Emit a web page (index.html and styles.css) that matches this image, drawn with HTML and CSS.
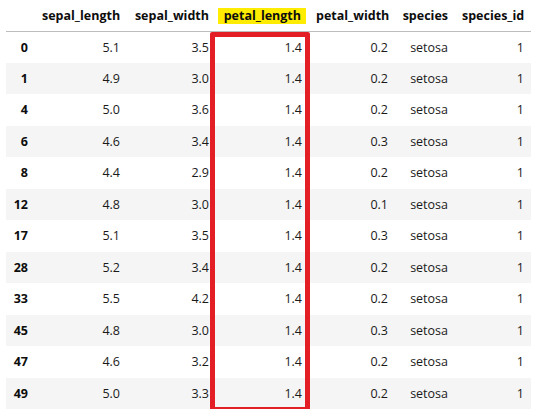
FILE: index.html
```html
<!DOCTYPE html>
<html>
<head>
<meta charset="utf-8">
<link rel="stylesheet" href="styles.css">
</head>
<body>
<div class="frame">
<table class="df">
<colgroup>
<col class="c-idx"><col class="c1"><col class="c2"><col class="c3"><col class="c4"><col class="c5"><col class="c6">
</colgroup>
<thead>
<tr><th></th><th>sepal_length</th><th>sepal_width</th><th class="hl-cell"><span class="hl">petal_length</span></th><th>petal_width</th><th>species</th><th>species_id</th></tr>
</thead>
<tbody>
<tr><th>0</th><td>5.1</td><td>3.5</td><td>1.4</td><td>0.2</td><td>setosa</td><td>1</td></tr>
<tr><th>1</th><td>4.9</td><td>3.0</td><td>1.4</td><td>0.2</td><td>setosa</td><td>1</td></tr>
<tr><th>4</th><td>5.0</td><td>3.6</td><td>1.4</td><td>0.2</td><td>setosa</td><td>1</td></tr>
<tr><th>6</th><td>4.6</td><td>3.4</td><td>1.4</td><td>0.3</td><td>setosa</td><td>1</td></tr>
<tr><th>8</th><td>4.4</td><td>2.9</td><td>1.4</td><td>0.2</td><td>setosa</td><td>1</td></tr>
<tr><th>12</th><td>4.8</td><td>3.0</td><td>1.4</td><td>0.1</td><td>setosa</td><td>1</td></tr>
<tr><th>17</th><td>5.1</td><td>3.5</td><td>1.4</td><td>0.3</td><td>setosa</td><td>1</td></tr>
<tr><th>28</th><td>5.2</td><td>3.4</td><td>1.4</td><td>0.2</td><td>setosa</td><td>1</td></tr>
<tr><th>33</th><td>5.5</td><td>4.2</td><td>1.4</td><td>0.2</td><td>setosa</td><td>1</td></tr>
<tr><th>45</th><td>4.8</td><td>3.0</td><td>1.4</td><td>0.3</td><td>setosa</td><td>1</td></tr>
<tr><th>47</th><td>4.6</td><td>3.2</td><td>1.4</td><td>0.2</td><td>setosa</td><td>1</td></tr>
<tr><th>49</th><td>5.0</td><td>3.3</td><td>1.4</td><td>0.2</td><td>setosa</td><td>1</td></tr>
</tbody>
</table>
<div class="mark-box"></div>
</div>
</body>
</html>
```

FILE: styles.css
```css
html, body {
  margin: 0;
  padding: 0;
  background: #ffffff;
}

.frame {
  position: relative;
  padding-left: 6px;
}

.df {
  border-collapse: collapse;
  border-spacing: 0;
  table-layout: fixed;
  width: 525px;
  font-family: "Open Sans", "Noto Sans", sans-serif;
  font-size: 12.5px;
  color: #1a1a1a;
}

.c-idx { width: 29px; }
.c1 { width: 92px; }
.c2 { width: 89px; }
.c3 { width: 93px; }
.c4 { width: 86px; }
.c5 { width: 60px; }
.c6 { width: 76px; }

.df th, .df td {
  text-align: right;
  vertical-align: middle;
  padding: 0 7px;
  white-space: nowrap;
  line-height: 17px;
}

.df thead tr {
  height: 31px;
}

.df thead th {
  font-weight: 700;
  color: #0d0d0d;
  border-bottom: 1px solid #bdbdbd;
  padding-top: 1px;
}

.df thead th.hl-cell {
  padding-left: 0;
  padding-right: 3px;
}

.hl {
  display: inline-block;
  background: #ffec00;
  padding: 0 5px 0 6px;
  line-height: 16px;
}

.df tbody tr {
  height: 31.5px;
}

.df tbody tr:nth-child(even) {
  background: #f5f5f5;
}

.df tbody th {
  font-weight: 700;
  color: #0d0d0d;
}

.mark-box {
  position: absolute;
  left: 210px;
  top: 32px;
  width: 100px;
  height: 380px;
  box-sizing: border-box;
  border: 5px solid #e31e24;
  border-radius: 2px;
}
```
